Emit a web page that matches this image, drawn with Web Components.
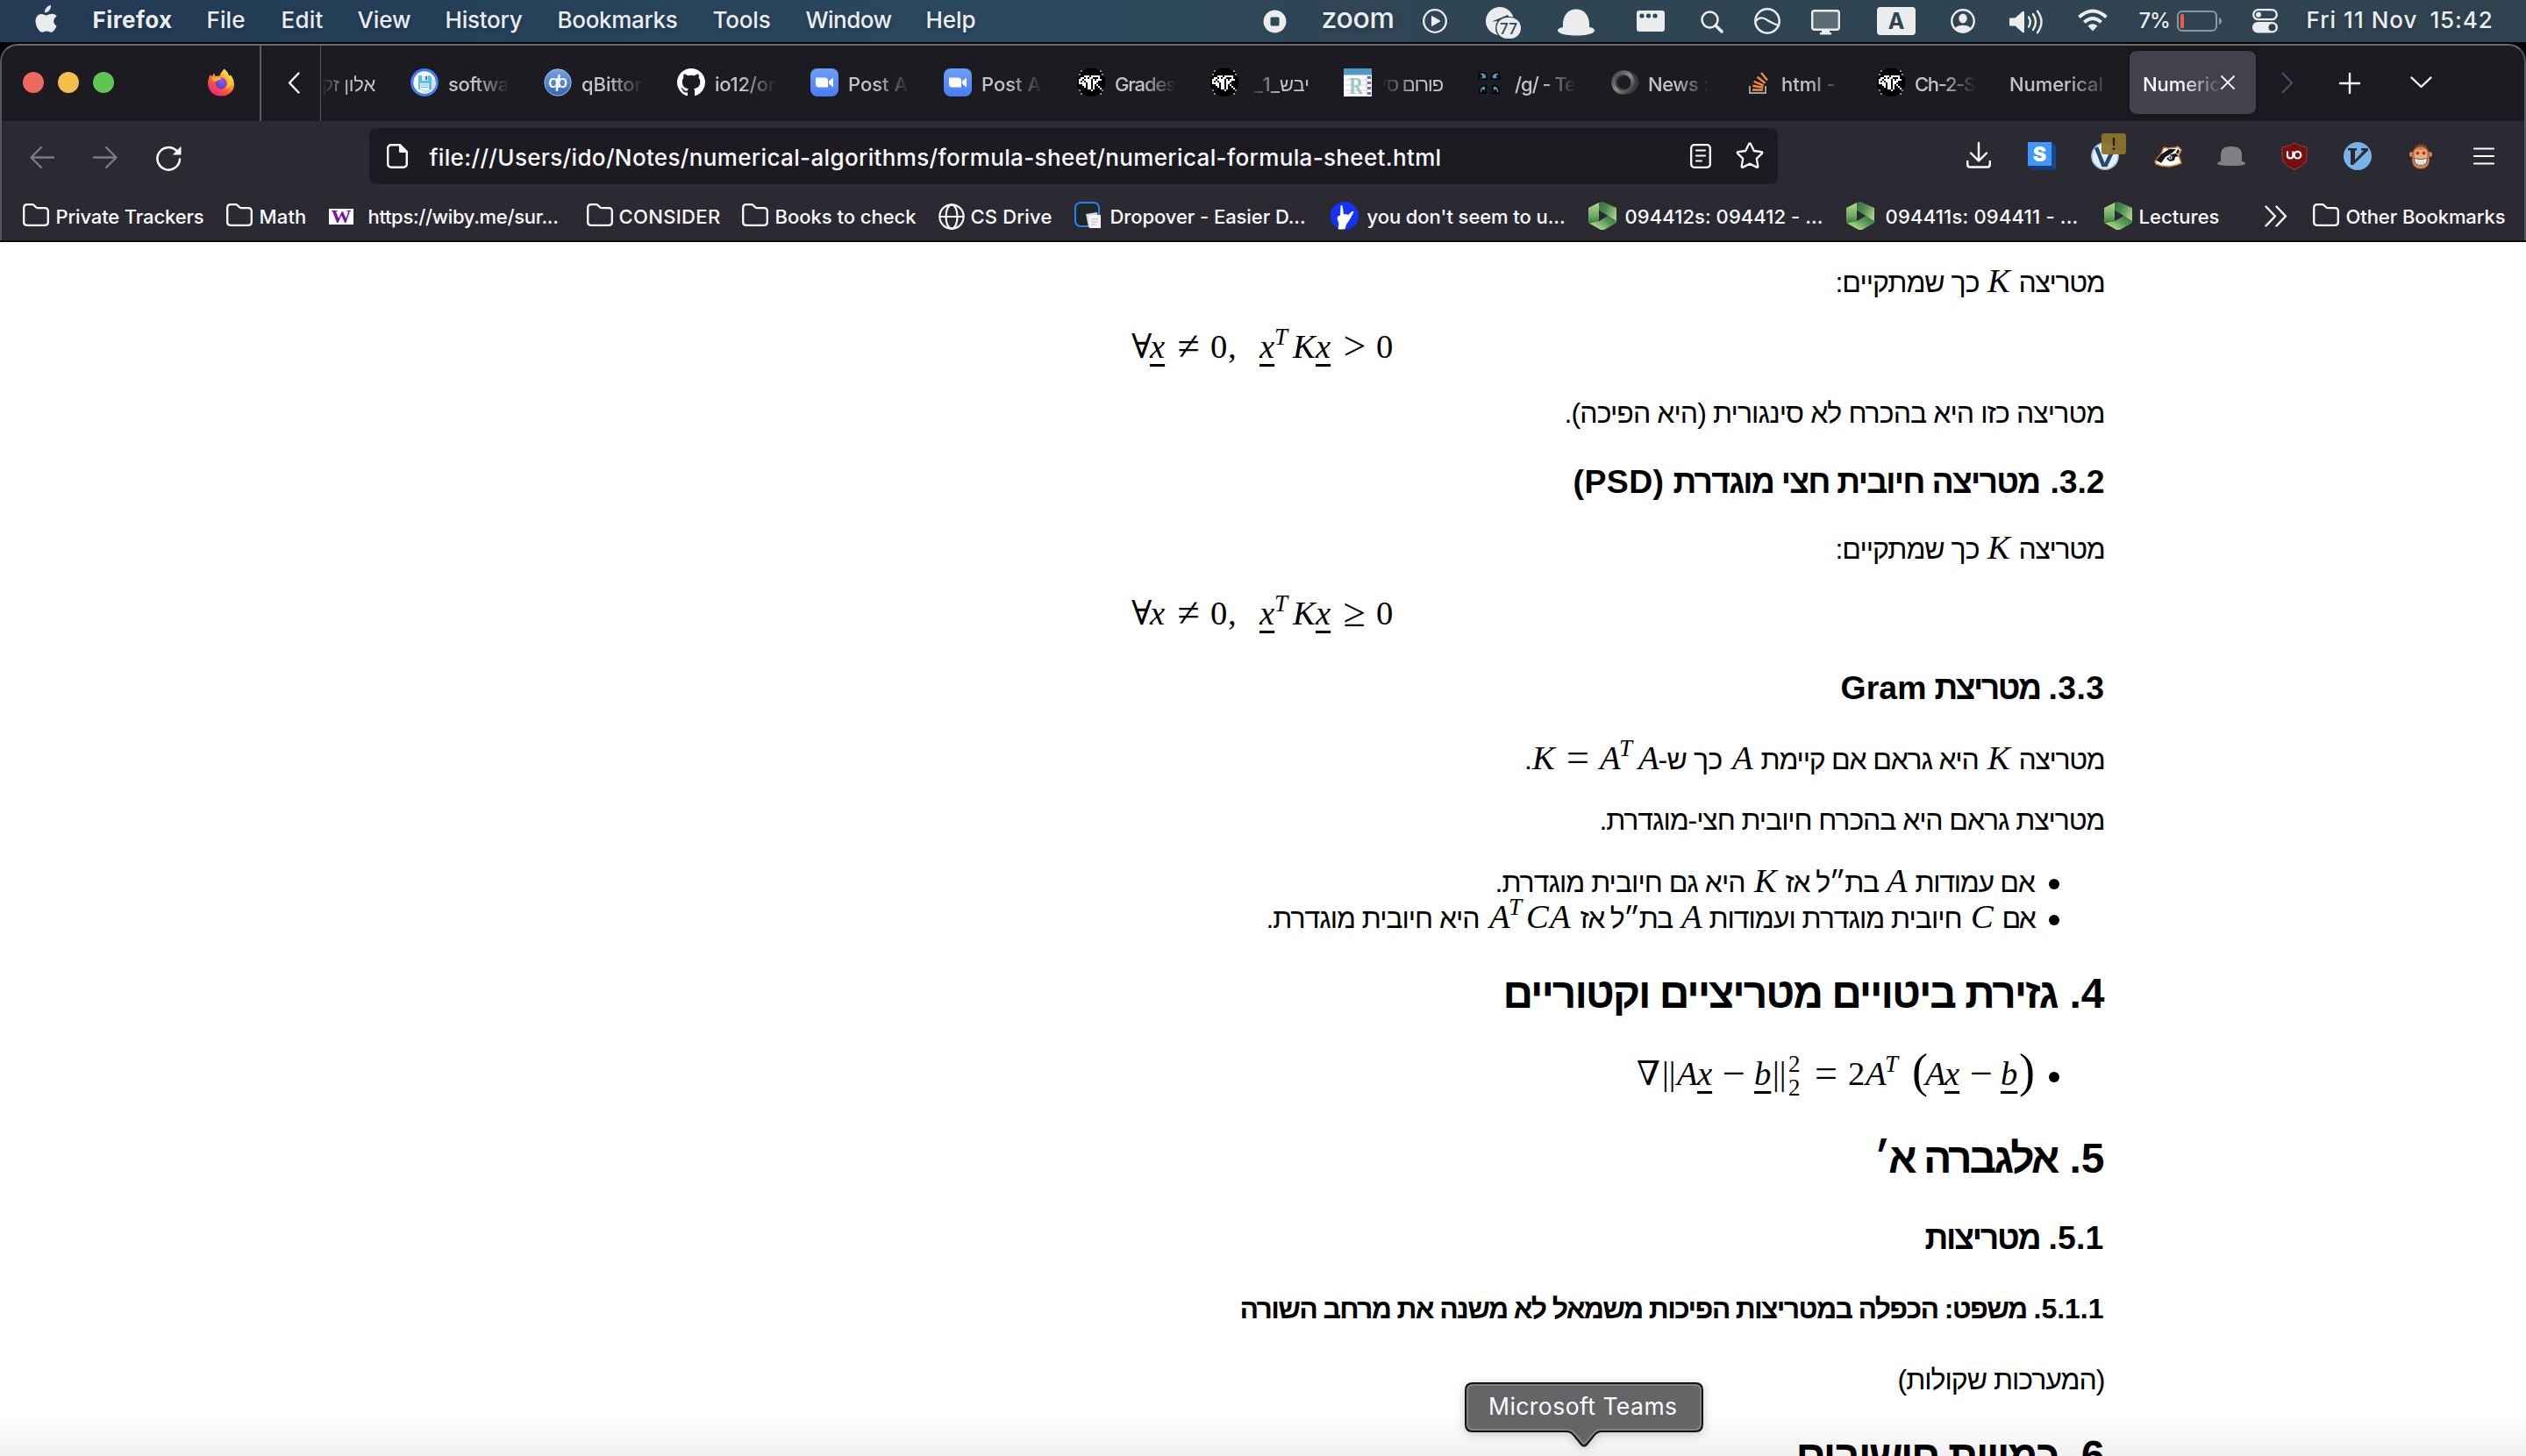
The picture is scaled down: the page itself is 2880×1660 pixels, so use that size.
<!DOCTYPE html>
<html lang="en">
<head>
<meta charset="utf-8">
<title>Numerical formula sheet</title>
<style>
html,body{margin:0;padding:0;width:2880px;height:1660px;overflow:hidden;background:#000}
body{font-family:Inter,"Liberation Sans",sans-serif}
</style>
</head>
<body>
<desk-top></desk-top>
<script>
const GR=['....XXX.XXXXX...','..XX.X.XX...X...','.XX.XXXX.X.XXX..','.X.X.XXX.XXX....','.XXXX.XX.XX.....','...XX.XX.X.X....','....X.XX.X..X...','......XX.X...X..','........X.......']
 .map((r,y)=>[...r].map((c,x)=>c==='X'?`M${x*2} ${y*2+8}h2v2h-2z`:'').join('')).join('');
const ICONS = {
apple:[26,34,'<path d="M18 1c.3 2.600-.8 4.700-2.200 6.200-1.400 1.400-3 2.200-4.800 2.100-.2-2.400.8-4.400 2.200-5.900C14.500 2 16.500 1.100 18 1z" fill="#ebecee"/><path d="M24.500 24.500c-1.500 3.900-3.700 7.300-6.400 7.300-2 0-2.600-1.200-4.900-1.200s-3.100 1.200-4.900 1.200C4.600 31.800.5 24.700.5 19.200c0-5.200 3.300-8.200 6.700-8.200 2.300 0 4.100 1.400 5.700 1.400 1.500 0 3.700-1.600 6.500-1.600 2.200 0 4.100 1 5.300 2.800-4.900 2.900-4.200 9.200-.2 10.900z" fill="#ebecee"/>'],
stop:[27,27,'<path fill-rule="evenodd" fill="#ebecee" d="M13.500.5a13 13 0 1 0 .01 0zM10 8.500h7a1.500 1.500 0 0 1 1.500 1.500v7a1.500 1.500 0 0 1-1.500 1.500h-7A1.500 1.500 0 0 1 8.500 17v-7A1.500 1.500 0 0 1 10 8.500z"/>'],
play:[28,28,'<circle cx="14" cy="14" r="12.800" fill="none" stroke="#ebecee" stroke-width="2.300"/><path d="M10.500 8.500l9.500 5.500-9.500 5.500z" fill="#ebecee" stroke="#ebecee" stroke-linejoin="round"/>'],
telegram:[40,36,'<circle cx="16" cy="16" r="16" fill="#ebecee"/><path d="M7 16.500L25 9l2 3-9 9-3-1 1-4z" fill="#2e4454"/><rect x="11" y="11" width="30" height="26" rx="13" fill="#2e4454"/><rect x="12.500" y="12" width="27.500" height="24" rx="12" fill="#ebecee"/><text x="26" y="30.500" font-family="Inter" font-size="17" font-weight="500" text-anchor="middle" fill="#2e4454">77</text>'],
hat:[42,31,'<path d="M6 21C5 9 11 .5 21 .5S37 9 36 21c3 .5 6 1.500 6 3.500 0 4-10 6-21 6s-21-2-21-6c0-2 3-3 6-3.500z" fill="#ebecee"/>'],
win:[32,24,'<rect width="32" height="24" rx="3" fill="#ebecee"/><circle cx="6" cy="6" r="2.600" fill="#2f4452"/><circle cx="13.500" cy="6" r="2.600" fill="#2f4452"/><circle cx="21" cy="6" r="2.600" fill="#2f4452"/>'],
search:[26,26,'<circle cx="10.500" cy="10.500" r="9" fill="none" stroke="#ebecee" stroke-width="2.500"/><path d="M17 17l7 7" stroke="#ebecee" stroke-width="3.600" stroke-linecap="round"/>'],
arc:[30,30,'<circle cx="15" cy="15" r="13.700" fill="none" stroke="#ebecee" stroke-width="2.500"/><path d="M2 15c4-5 9-4 13-1s7 3 12 6" fill="none" stroke="#ebecee" stroke-width="2.200"/>'],
display:[33,29,'<rect x="1.200" y="1.200" width="30.600" height="21.500" rx="2.500" fill="#5c6a74" stroke="#ebecee" stroke-width="2.400"/><path d="M12 23h9v3h2v2.500H10V26h2z" fill="#ebecee"/>'],
inputA:[44,32,'<rect width="44" height="32" rx="4" fill="#ebecee"/><text x="22" y="24.500" font-family="Inter" font-size="25" font-weight="700" text-anchor="middle" fill="#2f4250">A</text>'],
user:[28,28,'<circle cx="14" cy="14" r="12.700" fill="none" stroke="#ebecee" stroke-width="2.400"/><ellipse cx="14" cy="11" rx="4.700" ry="5.400" fill="#ebecee"/><path d="M5 22c3-4.500 15-4.500 18 0-4 6-14 6-18 0z" fill="#ebecee"/>'],
vol:[40,28,'<path d="M1 9.500h5.500L15 2q2-1 2 1v22q0 2-2 1l-8.500-7.500H1q-1 0-1-1v-7q0-1 1-1z" fill="#ebecee"/><path d="M22 8.500q3.500 5.500 0 11M27 5q6 9 0 18M32 1.800q9 12.200 0 24.400" fill="none" stroke="#ebecee" stroke-width="2.400" stroke-linecap="round"/>'],
wifi:[34,25,'<path d="M1.500 8.500q15.500-14 31 0M7.300 14.200q9.700-8.400 19.400 0" fill="none" stroke="#ebecee" stroke-width="3.900"/><path d="M11.500 18.500q5.500-4.500 11 0L17 24.500z" fill="#ebecee"/>'],
battery:[51,24,'<rect x="1" y="1" width="44" height="22" rx="5" fill="none" stroke="#8d99a1" stroke-width="2"/><rect x="4" y="4" width="4" height="16" rx="1.500" fill="#f25c4d"/><path d="M48 8q3 1 3 4t-3 4z" fill="#8d99a1"/>'],
control:[29,28,'<rect x="1.200" y="1.200" width="26.600" height="11" rx="5.500" fill="none" stroke="#ebecee" stroke-width="2.300"/><circle cx="7" cy="6.700" r="3" fill="#ebecee"/><rect y="15" width="29" height="12.500" rx="6.200" fill="#ebecee"/><circle cx="22.500" cy="21.200" r="4" fill="#2f4250"/>'],
firefox:[32,32,'<defs><linearGradient id="f1" x1=".85" y1=".1" x2=".25" y2="1"><stop offset="0" stop-color="#fff04e"/><stop offset=".35" stop-color="#ffa22f"/><stop offset=".65" stop-color="#ff5339"/><stop offset="1" stop-color="#e0228e"/></linearGradient><radialGradient id="f2" cx=".6" cy=".35"><stop offset="0" stop-color="#a04ef5"/><stop offset="1" stop-color="#5b4ad0"/></radialGradient></defs><path d="M19.500.5c3 2 5 5 5.500 8l2-1c3 4 4 7 4 11C31 26 24.500 31.500 16 31.500S1 25.500 1 17c0-4 1-7 3-10l1.500 2.500L8 5.500 9.500 9l5-.5c1-3 3-5.500 5-8z" fill="url(#f1)"/><circle cx="16" cy="17" r="6.500" fill="url(#f2)"/><path d="M5 11c4-2 8-2 12 1-2 1.500-5 1-6.500 3-2 0-4-1-5.500-4z" fill="#ffae37"/><path d="M23 9c3 6 2 11-2 14 7-1 9-8 5-13z" fill="#ffd83c" opacity=".8"/>'],
chevL:[14,25,'<path d="M12.500 1.500L2 12.500l10.500 11" fill="none" stroke="#fbfbfe" stroke-width="2.400" stroke-linecap="round" stroke-linejoin="round"/>'],
chevR:[14,25,'<path d="M1.500 1.500L12 12.500 1.500 23.500" fill="none" stroke="#505058" stroke-width="2.200" stroke-linecap="round" stroke-linejoin="round"/>'],
plus:[24,24,'<path d="M12 1v22M1 12h22" stroke="#fbfbfe" stroke-width="2.400" stroke-linecap="round"/>'],
chevD:[25,14,'<path d="M1.500 1.500l11 10.500 11-10.500" fill="none" stroke="#fbfbfe" stroke-width="2.400" stroke-linecap="round" stroke-linejoin="round"/>'],
close:[16,16,'<path d="M1 1l14 14M15 1L1 15" stroke="#fbfbfe" stroke-width="1.800" stroke-linecap="round"/>'],
floppy:[32,32,'<circle cx="16" cy="16" r="14.300" fill="#fff" stroke="#3f7df6" stroke-width="3.200"/><path d="M23 9l6.500 7A14 14 0 0 1 17 29l-8-6z" fill="#dcdcde"/><path d="M9 8h13l2 2v14H9z" fill="#5dbcf2"/><path d="M13 8h7v6h-7z" fill="#d9f0fd"/><path d="M17 9h2v4h-2z" fill="#3f6fa8"/><path d="M11 17h10v7H11z" fill="#e9f6fe"/><path d="M12 19h8M12 21.500h8" stroke="#5dbcf2"/>'],
qb:[32,32,'<defs><linearGradient id="q" x2="0" y2="1"><stop stop-color="#72a3e3"/><stop offset="1" stop-color="#3864b5"/></linearGradient></defs><circle cx="16" cy="16" r="15.200" fill="url(#q)" stroke="#9cc0ee"/><text x="16" y="22" font-family="Inter" font-size="20" text-anchor="middle" fill="#fff" textLength="22">qb</text>'],
github:[32,32,'<path transform="scale(2)" fill="#fff" d="M8 0C3.580 0 0 3.580 0 8c0 3.540 2.290 6.530 5.470 7.590.4.070.55-.17.55-.38 0-.19-.01-.82-.01-1.490-2.010.37-2.530-.49-2.690-.94-.09-.23-.48-.94-.82-1.130-.28-.15-.68-.52-.01-.53.63-.01 1.080.58 1.230.82.72 1.210 1.870.87 2.330.66.07-.52.28-.87.51-1.070-1.780-.2-3.640-.89-3.640-3.950 0-.87.31-1.590.82-2.150-.08-.2-.36-1.020.08-2.120 0 0 .67-.21 2.200.82.640-.18 1.320-.27 2-.27s1.360.09 2 .27c1.530-1.040 2.200-.82 2.200-.82.440 1.100.16 1.920.08 2.120.51.56.82 1.270.82 2.150 0 3.070-1.870 3.750-3.650 3.950.29.25.54.73.54 1.480 0 1.070-.01 1.930-.01 2.200 0 .21.15.46.55.38A8.010 8.010 0 0 0 16 8c0-4.420-3.580-8-8-8z"/>'],
zoomcam:[32,32,'<defs><linearGradient id="z" x2="0" y2="1"><stop stop-color="#6ba0f8"/><stop offset="1" stop-color="#4a7cf3"/></linearGradient></defs><rect width="32" height="32" rx="8" fill="url(#z)"/><path d="M6 10.500h10.500q3.500 0 3.500 3.500v7.500H9.500Q6 21.500 6 18zM21 14.500l5-4v11l-5-4z" fill="#fff"/>'],
gr:[32,32,'<path d="M10 0h12v2h4v2h2v2h2v4h2v12h-2v4h-2v2h-2v2h-4v2H10v-2H6v-2H4v-2H2v-4H0V10h2V6h2V4h2V2h4z" fill="#000"/><g fill="#8a8a8a"><path d="M4 4h2V2H4zM26 4h2V2h-2zM2 8h2V6H2zM28 8h2V6h-2zM4 28h2v2H4zM26 28h2v2h-2zM2 24h2v2H2zM28 24h2v2h-2z"/></g><path d="'+GR+'" fill="#fff"/>'],
reg:[32,32,'<path d="M0 0h32v32H0z" fill="#fff"/><path d="M0 0h32v7.500H0z" fill="#4f98c9"/><path d="M0 13h26M0 19h26M0 25h26M26 8v24" stroke="#cfcfd2" stroke-width="1.200"/><path d="M27 9h4v3h-4zM27 15h4v3h-4zM27 21h4v3h-4zM27 27h4v3h-4z" fill="#6865c4"/><text x="14" y="28.500" font-family="Liberation Serif" font-size="27" font-weight="700" text-anchor="middle" fill="#9cc8c9" textLength="16" lengthAdjust="spacingAndGlyphs">R</text>'],
clover:[28,28,'<g fill="#4f98c9" stroke="#000" stroke-width="1.600"><path d="M3 2h5l3 3v4H2V7h3V5H3zM25 2h-5l-3 3v4h9V7h-3V5h2zM6 17h4v8H8v-3H6v3H3v-4zM22 17h-4v8h2v-3h2v3h3v-4z"/></g>'],
ring:[32,28,'<defs><linearGradient id="r" x2="1" y2="1"><stop stop-color="#404040"/><stop offset=".5" stop-color="#8a8a8a"/><stop offset="1" stop-color="#333"/></linearGradient></defs><ellipse cx="17" cy="14" rx="12" ry="10.500" fill="none" stroke="#3c3c3f" stroke-width="6"/><ellipse cx="14.500" cy="14" rx="11" ry="11.500" fill="none" stroke="url(#r)" stroke-width="4.500"/>'],
so:[22,25,'<path d="M1 16v8h18v-8" fill="none" stroke="#9c9fa3" stroke-width="2"/><path d="M4 20.500h12M4.300 15.800l12 2M5.700 10.800l11 4.500M9.500 5.800l9 7M14 1l7 8.500" stroke="#f08a3c" stroke-width="2.400"/>'],
back:[28,25,'<path d="M13 1L1.500 12.500 13 24M2 12.500h25" fill="none" stroke="#7d7c83" stroke-width="2.400" stroke-linecap="round" stroke-linejoin="round"/>'],
fwd:[28,25,'<path d="M15 1l11.500 11.500L15 24M26 12.500H1" fill="none" stroke="#7d7c83" stroke-width="2.400" stroke-linecap="round" stroke-linejoin="round"/>'],
reload:[29,29,'<path d="M23 5.500A12.800 12.800 0 1 0 27 15.500" fill="none" stroke="#fbfbfe" stroke-width="2.500" stroke-linecap="round"/><path d="M28.500.8v9q0 .7-.7.7h-9z" fill="#fbfbfe"/>'],
doc:[24,28,'<path d="M15 1.200H5a3.800 3.800 0 0 0-3.800 3.800v18A3.800 3.800 0 0 0 5 26.800h14a3.800 3.800 0 0 0 3.800-3.800V9z" fill="none" stroke="#fbfbfe" stroke-width="2.400"/><path d="M14 .5v8q0 1.500 1.500 1.500h8z" fill="#fbfbfe"/>'],
reader:[24,28,'<rect x="1.200" y="1.200" width="21.600" height="25.600" rx="3.500" fill="none" stroke="#fbfbfe" stroke-width="2.300"/><path d="M7 7.500h10M7 13.500h10M7 19.500h6" stroke="#fbfbfe" stroke-width="2.200" stroke-linecap="round"/>'],
star:[32,31,'<path d="M16 1.500q.8 0 1.200 1l3.600 7.500 8.400 1.100q1.800.4.700 1.800l-6.100 6 1.500 8.500q.2 1.800-1.500 1.200L16 24.700l-7.800 3.900q-1.700.6-1.500-1.200l1.500-8.500-6.100-6q-1.100-1.400.7-1.800l8.400-1.100 3.600-7.500q.4-1 1.200-1z" fill="none" stroke="#fbfbfe" stroke-width="2.300" stroke-linejoin="round"/>'],
dl:[28,30,'<path d="M14 1v20M5 12.500l9 9 9-9M1.200 22v3.500q0 3 3 3h19.600q3 0 3-3V22" fill="none" stroke="#fbfbfe" stroke-width="2.400" stroke-linecap="round" stroke-linejoin="round"/>'],
sbox:[32,32,'<path d="M27 0l5 5v27H5l-5-5z" fill="#174a8c"/><path d="M0 27h27l5 5H5z" fill="#143c72"/><path d="M0 0h27v27H0z" fill="#3f97fb"/><text x="13.500" y="22" font-family="Inter" font-weight="900" font-size="23" text-anchor="middle" fill="#fff">S</text>'],
vcirc:[40,44,'<circle cx="16" cy="27" r="15.200" fill="#e9edf3" stroke="#8fb0e8" stroke-width="1.500"/><path d="M6 17l8 20h3l9-19" fill="none" stroke="#1e4d76" stroke-width="4.600"/><rect x="12" y="1" width="28" height="24" rx="3" fill="#8a722b" opacity=".96"/><text x="26" y="20" font-family="Inter" font-size="18" text-anchor="middle" fill="#15141a">!</text>'],
badger:[32,25,'<path d="M1 18L8 9l3-7 5 1 9-1 2-1 4 4-3 6 3 9-5 2-9 2-9-1-6-2z" fill="#fff" stroke="#d07a2e" stroke-width="1.500"/><path d="M2 17L8 10l9-6h8l-4 4-8 5-5 7-3-2z" fill="#17171b"/><path d="M27 4l2 2-2 4-2-2zM14 15l5-5 6-1 3 3-4 1-1 4-5 1z" fill="#17171b"/><circle cx="18.500" cy="13.500" r="2.200" fill="#ddd"/><circle cx="18.500" cy="13.500" r="1" fill="#111"/>'],
hat2:[32,22,'<path d="M4 17V9q0-9 12-9t12 9v8q4 .5 4 2.500Q32 22 16 22T0 19.500Q0 17.500 4 17z" fill="#808083"/>'],
ublock:[30,32,'<path d="M15 .8q5.500 4.500 14 5v11.500q0 8.500-14 14-14-5.500-14-14V5.800q8.500-.5 14-5z" fill="#750f10" stroke="#a34a4a" stroke-width=".8"/><path d="M7 10.500v4.500q0 3.500 3.200 3.500t3.200-3.500v-4.500" fill="none" stroke="#fff" stroke-width="2.200"/><circle cx="18.500" cy="14.700" r="3.800" fill="none" stroke="#fff" stroke-width="2.200"/>'],
vim:[32,32,'<circle cx="16" cy="16" r="16" fill="#78b2e6"/><path d="M5 7h10v2.500h-2v11L23 9.500h-3V7h8v2.500L11 26H8V9.500H5z" fill="#2b2a33"/>'],
monkey:[26,31,'<path d="M8 7L7 3l3 2 1-4 2 3 3-3v4l4-2-2 5z" fill="#8a4e27"/><circle cx="3" cy="14" r="3" fill="#c98756"/><circle cx="23" cy="14" r="3" fill="#c98756"/><path d="M13 5q8.500 0 9 8 .5 4 1 8-1 9.500-10 9.500T3 21q.5-4 1-8 .5-8 9-8z" fill="#c98455" stroke="#7a4522" stroke-width=".8"/><path d="M13 9.500q6-3 7 3v7q-1 8-7 8t-7-8v-7q1-6 7-3z" fill="#e5b083"/><circle cx="9.500" cy="12.500" r="2" fill="#e4231c"/><circle cx="16.500" cy="12.500" r="2" fill="#e4231c"/><path d="M5.500 18.500q7.500 2.500 15 0-.5 8-7.500 8t-7.500-8z" fill="#fff" stroke="#5c3219" stroke-width=".8"/><path d="M10 19.500v6M13 20v6.500M16 19.500v6" stroke="#8f8f8f" stroke-width=".7"/>'],
burger:[24,20,'<path d="M1 1.500h22M1 10h22M1 18.500h22" stroke="#fbfbfe" stroke-width="2.200" stroke-linecap="round"/>'],
folder:[30,26,'<path d="M5 1.200h5.500q1.500 0 2.500 1l2 2q1 1 2.500 1H25q3.800 0 3.800 3.800v12q0 3.800-3.800 3.800H5q-3.800 0-3.800-3.800V5Q1.200 1.200 5 1.200z" fill="none" stroke="#fbfbfe" stroke-width="2.300"/>'],
wiby:[28,18,'<path d="M0 0h28v18H0z" fill="#fff"/><text x="14" y="16.300" font-family="Liberation Serif" font-weight="700" font-size="21" text-anchor="middle" fill="#6f14a0" textLength="23" lengthAdjust="spacingAndGlyphs">W</text>'],
globe:[30,30,'<g fill="none" stroke="#fbfbfe" stroke-width="2.200"><circle cx="15" cy="15" r="13.700"/><ellipse cx="15" cy="15" rx="6.500" ry="13.700"/><path d="M1.500 15h27"/></g>'],
drop:[31,31,'<rect x="1" y="1" width="27" height="27" rx="6" fill="#20262a" stroke="#2f7ff0" stroke-width="2"/><path d="M13 14l13-2 2 15-12 2z" fill="#d5d5d7"/><path d="M16 15h14v15H17z" fill="#f4f4f5"/><path d="M19 20h8M19 23h8M19 26h6" stroke="#bbb"/>'],
hand:[32,32,'<circle cx="16" cy="16" r="16" fill="#1433fa"/><path d="M8.500 31l1-6-2-6 1-2.500 2.500-1L11.500 5q1-2 2.200 0l1.300 9.500 2.500-.5 2.500 1 4.500-4q2-.5 2 .8L21.500 21l-3.500 5-1.500 5Q12 32 8.500 31z" fill="#fff"/>'],
hex:[32,32,'<defs><linearGradient id="ha" x2="0" y2="1"><stop stop-color="#b9d58c"/><stop offset=".6" stop-color="#6fae66"/><stop offset="1" stop-color="#37763f"/></linearGradient><linearGradient id="hb" x2="1" y2=".6"><stop stop-color="#2f7440"/><stop offset=".45" stop-color="#4b8a4e"/><stop offset="1" stop-color="#a9cb84"/></linearGradient><linearGradient id="hc" x1="1" y1="0" x2="0" y2=".8"><stop stop-color="#2a6b3a"/><stop offset=".45" stop-color="#5a9b58"/><stop offset="1" stop-color="#d0e59b"/></linearGradient></defs><path d="M0 7L12 1v21L2 25l-2-1z" fill="url(#ha)"/><path d="M12 1l4-1 16 7v16l-10-7-10-6z" fill="url(#hb)"/><path d="M32 22v2L18 32h-4L1 24.500 12 22l10-6z" fill="url(#hc)"/><path d="M12 10l10 6-10 6z" fill="#2b2a33"/>'],
more:[26,25,'<path d="M1.500 1.500l10.500 11-10.500 11M13.500 1.500L24 12.500l-10.500 11" fill="none" stroke="#fbfbfe" stroke-width="2.400" stroke-linecap="round" stroke-linejoin="round"/>'],
red:[24,24,'<circle cx="12" cy="12" r="12" fill="#ed6a5f"/>'],
yellow:[24,24,'<circle cx="12" cy="12" r="12" fill="#f5bf4f"/>'],
green:[24,24,'<circle cx="12" cy="12" r="12" fill="#61c554"/>'],
dot:[12,12,'<circle cx="6" cy="6" r="6" fill="#000"/>'],
rule:[2,88,'<path d="M0 0h2v88H0z" fill="#5b5b60"/>'],
rule1:[1,88,'<path d="M0 0h1v88H0z" fill="#55555b"/>'],
};

class UiIcon extends HTMLElement{
  connectedCallback(){
    const [w,h,body]=ICONS[this.getAttribute('name')];
    this.attachShadow({mode:'open'}).innerHTML=
      `<style>:host{display:block;flex:none;width:${w}px;height:${h}px}svg{display:block;overflow:visible}</style><svg width="${w}" height="${h}" viewBox="0 0 ${w} ${h}">${body}</svg>`;
  }
}
customElements.define('ui-icon',UiIcon);

/* One text run. "fit" tracks the letters to fill a width, "max" only tightens them. */
class TextRun extends HTMLElement{
  connectedCallback(){
    this.attachShadow({mode:'open'}).innerHTML=
      `<style>:host{display:block;flex:none;white-space:pre}span{display:inline-block}</style><span><slot></slot></span>`;
    const fit=+this.getAttribute('fit'),max=+this.getAttribute('max'),w=fit||max;
    if(w){
      const s=this.shadowRoot.querySelector('span');
      const n=[...this.textContent].length;
      const nat=s.getBoundingClientRect().width;
      if(n>1&&(fit||nat>max)) s.style.letterSpacing=((w-nat)/n).toFixed(3)+'px';
    }
  }
}
customElements.define('text-run',TextRun);

/* A row whose children share one baseline, set by a strut at its start. */
const rtl=/[\u0590-\u05ff]/;
const esc=s=>s.replace(/&/g,'&amp;').replace(/</g,'&lt;').replace(/>/g,'&gt;');
const T=(s,x,x2,cls='')=>({s,x:x-1.5,w:x2-x+3,cls,fit:1});
const H=(s,x,x2,cls='')=>({s,x:x-1.5,w:x2-x+1,cls,fit:1,rtl:1});
const L=(s,x,w,cls='')=>({s,x,w,cls,max:1});
const I=(name,x,y)=>({name,x,y,w:ICONS[name][0]});
const M=(s,x,cls='v')=>({s,x,w:0,cls});
function row(items,base,top=0){
  items=[...items].sort((a,b)=>a.x-b.x);
  let c=0,out=`<i class="strut" style="height:${base}px"></i>`;
  for(const it of items){
    const ml=(it.x-c).toFixed(2); c=it.x+it.w;
    if(it.name) out+=`<ui-icon name="${it.name}" style="align-self:flex-start;margin-left:${ml}px;margin-top:${it.y-top}px"></ui-icon>`;
    else out+=`<text-run class="${it.cls}" ${it.rtl||rtl.test(it.s)?'dir="rtl"':''} ${it.fit?`fit="${it.w}"`:it.max?`max="${it.w-1}"`:''} style="margin-left:${ml}px;width:${it.w}px"><span class="in">${esc(it.s)}</span></text-run>`;
  }
  return out;
}
const ROWCSS=`.strut{display:block;width:0;flex:none}.row{display:flex;align-items:baseline;overflow:visible}`;

class MacMenubar extends HTMLElement{
  connectedCallback(){
    this.attachShadow({mode:'open'}).innerHTML=`<style>${ROWCSS}
    :host{display:block;height:48px;background:linear-gradient(90deg,#243a55 0,#254059 18%,#2b485e 38%,#2f4553 60%,#304351 100%);color:#ebecee;font-size:26px;font-weight:500}
    .row{height:48px}text-run{line-height:1px;text-shadow:0 2px 5px #0004}.b{font-weight:700}.z{font-size:32px;font-weight:450}.s{font-size:24px}</style>
    <div class="row">${row([I('apple',40,5),T('Firefox',107,195,'b'),T('File',237,278),T('Edit',322,367),T('View',409,467),T('History',509,594),T('Bookmarks',637,771),T('Tools',814,877),T('Window',920,1015),T('Help',1057,1111),
    I('stop',1440,10.5),T('zoom',1508,1588,'z'),I('play',1622,10),I('telegram',1694,8),I('hat',1776,9.5),I('win',1866,12),I('search',1939,12),I('arc',2000,9),I('display',2065,11),I('inputA',2140,8),I('user',2224,10),I('vol',2291,10.5),I('wifi',2369,11),T('7%',2440,2472,'s'),I('battery',2482,12),I('control',2568,10),T('Fri 11 Nov',2631,2755),T('15:42',2772,2841)],32)}</div>`;
  }
}
customElements.define('mac-menubar',MacMenubar);

class TabStrip extends HTMLElement{
  connectedCallback(){
    const tabs=[['floppy','softwa'],['qb','qBittor'],['github','io12/or'],['zoomcam','Post A'],['zoomcam','Post A'],['gr','Grades'],['gr','יבש_1_'],['reg','פורום סי'],['clover','/g/ - Te'],['ring','News :'],['so','html -'],['gr','Ch-2-S']];
    const dx={clover:0,so:6},dy={clover:3,ring:2,so:4};
    const items=[I('red',26,82),I('yellow',66,82),I('green',106,82),I('firefox',236,78),I('rule',296,50),I('chevL',328,82),I('rule1',365,50),L('אלון זק',366,62,'lab')];
    tabs.forEach(([ic,s],k)=>{const x=468+152*k;items.push(I(ic,x+(dx[ic]||0),78+(dy[ic]||0)),L(s,x+43,70,'lab'));});
    items.push(L('Numerical',2291,108,'lab num'));
    const act=row([L('Numeric',2443,90,'lab on'),I('close',2532,86)].map(i=>({...i,x:i.x-2428})),46,58);
    const tail=row([I('chevR',2601,82),I('plus',2667,83),I('chevD',2748,87)].map(i=>({...i,x:i.x-2572})),54,50);
    this.attachShadow({mode:'open'}).innerHTML=`<style>${ROWCSS}
    :host{display:flex;height:88px;background:#1c1b22;font-size:22px;font-weight:500;color:#fbfbfe}
    .main{width:2428px;height:88px}.tail{height:88px}
    .act{margin-top:8px;width:144px;height:72px;border-radius:8px;background:#42414d;box-shadow:0 0 6px #0008}
    .lab{line-height:30px;opacity:.75;-webkit-mask-image:linear-gradient(90deg,#000 45%,transparent 100%)}
    .lab[dir=rtl]{-webkit-mask-image:linear-gradient(270deg,#000 45%,transparent 100%)}
    .lab.num{-webkit-mask-image:linear-gradient(90deg,#000 60%,#0003 100%)}
    .lab.on{opacity:1;-webkit-mask-image:linear-gradient(90deg,#000 50%,transparent 100%)}</style>
    <div class="row main">${row(items,53.7,50)}</div><div class="row act">${act}</div><div class="row tail">${tail}</div>`;
  }
}
customElements.define('tab-strip',TabStrip);

class NavBar extends HTMLElement{
  connectedCallback(){
    this.attachShadow({mode:'open'}).innerHTML=`<style>${ROWCSS}
    :host{display:flex;height:80px;background:#2b2a33;color:#fbfbfe;font-size:26px;font-weight:500}
    .l{width:421px}.u{width:1606px;height:64px;margin-top:8px;border-radius:8px;background:#1c1b22}text-run{line-height:1px}.u text-run{font-weight:450}</style>
    <div class="row l">${row([I('back',34,167),I('fwd',106,167),I('reload',178,166)],10,138)}</div>
    <div class="row u">${row([I('doc',441,164),T('file:///Users/ido/Notes/numerical-algorithms/formula-sheet/numerical-formula-sheet.html',491,1642),I('reader',1927,164),I('star',1979,162)].map(i=>({...i,x:i.x-421})),43,146)}</div>
    <div class="row">${row([I('dl',2242,162),I('sbox',2312,162),I('vcirc',2384,151),I('badger',2456,166),I('hat2',2528,167),I('ublock',2601,162),I('vim',2672,162),I('monkey',2747,162),I('burger',2820,168)].map(i=>({...i,x:i.x-2027})),10,138)}</div>`;
  }
}
customElements.define('nav-bar',NavBar);

class BookmarkBar extends HTMLElement{
  connectedCallback(){
    this.attachShadow({mode:'open'}).innerHTML=`<style>${ROWCSS}
    :host{display:block;height:56px;background:#2b2a33;color:#fbfbfe;font-size:22px;font-weight:500}text-run{line-height:1px}</style>
    <div class="row">${row([I('folder',26,232),T('Private Trackers',65,231),I('folder',258,232),T('Math',297,348),I('wiby',375,238),T('https://wiby.me/sur...',421,635),I('folder',669,232),T('CONSIDER',707,820),I('folder',846,232),T('Books to check',885,1043),I('globe',1070,232),T('CS Drive',1108,1198),I('drop',1225,230),T('Dropover - Easier D...',1267,1487),I('hand',1517,230),T("you don't seem to u...",1560,1783),I('hex',1811,230),T('094412s: 094412 - ...',1854,2077),I('hex',2105,230),T('094411s: 094411 - ...',2151,2368),I('hex',2399,230),T('Lectures',2440,2529),I('more',2582,234),I('folder',2637,232),T('Other Bookmarks',2676,2855)],37,218)}</div>`;
  }
}
customElements.define('bookmark-bar',BookmarkBar);

class FormulaSheet extends HTMLElement{
  connectedCallback(){
    const eq=(rel,ux)=>[M('∀',1290,'n sy'),M('x',1311,ux?'v ul':'v'),M('≠',1342.5,'n op'),M('0',1380,'n'),M(',',1400,'n'),M('x',1436,'v ul'),M('T',1453,'v sup'),M('K',1474,'v'),M('x',1500,'v ul'),M(rel,1531.5,'n op'),M('0',1569,'n')];
    const kp=[H('מטריצה',2303,2400),M('K',2266),H('כך שמתקיים:',2094,2257)];
    const rows=[
     [332.7,kp],[407.7,eq('>',1)],
     [481.7,[H('מטריצה כזו היא בהכרח לא סינגורית (היא הפיכה).',1785,2400)]],
     [561.7,[H('3.2.',2339,2400,'h3'),H('מטריצה חיובית חצי מוגדרת',1909,2326,'h3'),H('(PSD)',1795,1898,'h3')]],
     [636.7,kp],[711.7,eq('≥',0)],
     [796.7,[H('3.3.',2337,2400,'h3'),H('מטריצת',2207,2326,'h3'),T('Gram',2100,2195,'h3')]],
     [876.7,[H('מטריצה',2303,2400),M('K',2266),H('היא גראם אם קיימת',2009,2256),M('A',1975),H('כך ש-',1892,1964),M('A',1868),M('T',1846,'v sup'),M('A',1824),M('=',1786,'n op'),M('K',1747),M('.',1738,'')]],
     [945.7,[H('מטריצת גראם היא בהכרח חיובית חצי-מוגדרת.',1825,2400)]],
     [1016.7,[I('dot',2336,1002),H('אם עמודות',2185,2320),M('A',2151),H('בת״ל אז',2037,2142),M('K',2000),H('היא גם חיובית מוגדרת.',1706,1990)]],
     [1057.7,[I('dot',2336,1043),H('אם',2284,2320),M('C',2247),H('חיובית מוגדרת ועמודות',1950,2237),M('A',1917),H('בת״ל אז',1803,1907),M('A',1767),M('C',1740),M('T',1720,'v sup'),M('A',1698),H('היא חיובית מוגדרת.',1445,1687)]],
     [1149.5,[H('4.',2361,2400,'h2'),H('גזירת ביטויים מטריציים וקטוריים',1715,2346,'h2')]],
     [1236.8,[I('dot',2336,1221.6),M('∇',1866,'n sy'),M('||',1895,'n'),M('A',1912),M('x',1935,'v ul'),M('−',1964,'n op'),M('b',2000,'v ul'),M('||',2021,'n'),M('2',2039,'n sup'),M('2',2039.1,'n sub'),M('=',2069,'n op'),M('2',2107,'n'),M('A',2127),M('T',2149,'v sup'),M('(',2180,'n big'),M('A',2195),M('x',2217,'v ul'),M('−',2246,'n op'),M('b',2281,'v ul'),M(')',2302,'n big')]],
     [1336.7,[H('5.',2361,2400,'h2'),H('אלגברה א׳',2138,2346,'h2')]],
     [1423.6,[H('5.1.',2337,2399,'h3'),H('מטריצות',2196,2326,'h3')]],
     [1503.5,[H('5.1.1.',2320,2399,'h4'),H('משפט: הכפלה במטריצות הפיכות משמאל לא משנה את מרחב השורה',1415,2311,'h4')]],
     [1583.8,[H('(המערכות שקולות)',2165,2400)]],
     [1676,[H('6.',2361,2400,'h2'),H('כמויות חישובים',2049,2346,'h2')]]];
    let top=276,html='';
    for(const [b,it] of rows){const bot=b+10;html+=`<div class="row" style="height:${(bot-top).toFixed(2)}px">${row(it,(b-top).toFixed(2),top)}</div>`;top=bot;}
    this.attachShadow({mode:'open'}).innerHTML=`<style>${ROWCSS}
    :host{display:block;height:1384px;overflow:hidden;background:linear-gradient(#fff 0,#fff 1334px,#f1f1f2 1384px);color:#000;font-family:"Liberation Sans",sans-serif;font-size:32px}
    text-run{line-height:1px}
    .h2,.h3,.h4{font-weight:700}.h2{font-size:48px}.h3{font-size:37.4px}
    .v,.n{font-family:"Liberation Serif","DejaVu Serif",serif;font-size:38.6px}.v{font-style:italic}
    .ul .in{text-decoration:underline;text-decoration-thickness:3.2px;text-underline-offset:7px;text-decoration-skip-ink:none}
    .in{line-height:0}.op .in{font-size:46px;vertical-align:-2px}.sup .in{font-size:27px;vertical-align:15px}.sub .in{font-size:27px;vertical-align:-12px}.big .in{font-size:54px;vertical-align:-2px}</style>${html}`;
  }
}
customElements.define('formula-sheet',FormulaSheet);

class DockTooltip extends HTMLElement{
  connectedCallback(){
    this.attachShadow({mode:'open'}).innerHTML=`<style>${ROWCSS}
    :host{display:block;position:absolute;left:1670px;top:1576px;width:272px;height:74px;color:#fff;font-size:26.5px}
    svg{position:absolute;left:0;top:0;overflow:visible;filter:drop-shadow(0 2px 6px #0003)}.row{position:relative}text-run{line-height:1px}</style>
    <svg width="272" height="74"><path d="M9 1h254q8 0 8 8v39q0 8-8 8H156q-5 0-8 4l-9 11q-3 3-6 0l-9-11q-3-4-8-4H9q-8 0-8-8V9q0-8 8-8z" fill="#646567" stroke="#111" stroke-width="2"/><path d="M10 3h252q7 0 7 7v37q0 7-7 7H155q-5 0-8 4l-11 12-11-12q-3-4-8-4H10q-7 0-7-7V10q0-7 7-7z" fill="none" stroke="#8a8b8d" stroke-width="1.500"/></svg>
    <div class="row">${row([T('Microsoft Teams',28.5,241)],37)}</div>`;
  }
}
customElements.define('dock-tooltip',DockTooltip);

class BrowserWindow extends HTMLElement{
  connectedCallback(){
    this.attachShadow({mode:'open'}).innerHTML=`<style>
    :host{display:block;margin-top:2px}.c{position:relative;height:224px;border-radius:20px 20px 0 0;overflow:hidden;background:#2b2a33;border-bottom:2px solid #0c0c0e}
    .c::after{content:"";position:absolute;inset:0;border:2px solid #55555a;border-top-color:#6a6a6f;border-bottom:0;border-radius:20px 20px 0 0}</style>
    <div class="c"><tab-strip></tab-strip><nav-bar></nav-bar><bookmark-bar></bookmark-bar></div><formula-sheet></formula-sheet>`;
  }
}
customElements.define('browser-window',BrowserWindow);

class DeskTop extends HTMLElement{
  connectedCallback(){
    this.attachShadow({mode:'open'}).innerHTML=`<style>:host{display:block;position:relative;width:2880px;height:1660px;overflow:hidden;background:#050507}</style><mac-menubar></mac-menubar><browser-window></browser-window><dock-tooltip></dock-tooltip>`;
  }
}
customElements.define('desk-top',DeskTop);
</script>
</body>
</html>
